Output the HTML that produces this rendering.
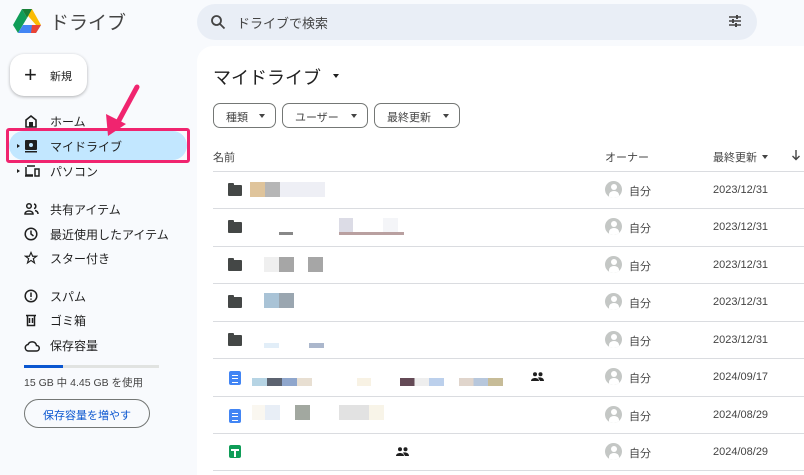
<!DOCTYPE html>
<html><head><meta charset="utf-8"><style>
*{margin:0;padding:0;box-sizing:border-box}
body{width:804px;height:475px;overflow:hidden;background:#f8fafd;font-family:"Liberation Sans","Noto Sans CJK JP",sans-serif;color:#1f1f1f;position:relative}
.a{position:absolute}
.nav{position:absolute;left:50px;font-size:12px;color:#1f1f1f}
.ic{position:absolute;left:24px}
.main{position:absolute;left:197px;top:46px;width:607px;height:429px;background:#fff;border-top-left-radius:16px}
.chip{position:absolute;top:103px;height:25px;border:1px solid #747775;border-radius:7px;font-size:11px;color:#444;padding:5px 0 0 12px}
.chip:after{content:"";position:absolute;right:10px;top:10px;border:3.5px solid transparent;border-top:4px solid #444}
.line{position:absolute;left:213px;width:591px;height:1px;background:#dadce0}
.row{position:absolute;left:213px;width:591px;height:37px}
.own{position:absolute;left:392px;top:12px;font-size:11px;color:#444}
.av{position:absolute;left:392px;top:10px;width:17px;height:17px;border-radius:50%;background:#c4c7c5;overflow:hidden}
.av:before{content:"";position:absolute;left:5.5px;top:3px;width:6px;height:6px;border-radius:50%;background:#fff}
.av:after{content:"";position:absolute;left:3.5px;top:10px;width:10px;height:8px;border-radius:50% 50% 0 0;background:#fff}
.dt{position:absolute;left:500px;top:13px;font-size:11px;color:#444}
.b{position:absolute;height:15px}
.fold{position:absolute;left:15px;top:14px;width:14px;height:11px;background:#444746;border-radius:1px}
.fold:before{content:"";position:absolute;left:0;top:-2px;width:6px;height:3px;background:#444746;border-radius:1px 1px 0 0}
.doc{position:absolute;left:16px;top:13px;width:12px;height:14px;background:#4285f4;border-radius:2px}
.doc:before{content:"";position:absolute;left:3px;top:4px;width:6px;height:6px;border-top:1px solid #fff;border-bottom:1px solid #fff}
.doc:after{content:"";position:absolute;left:3px;top:7px;width:6px;height:1px;background:#fff}
</style></head><body>
<svg class="a" style="left:13px;top:9px" width="28" height="25" viewBox="0 0 28 25"><polygon points="9,0 19,0 28,16 23,16" fill="#fbbc04"/><polygon points="9,0 14,9 5,24 0,16" fill="#0f9d58"/><polygon points="9,0 19,0 14,9" fill="#188038"/><polygon points="5,24 10,16 28,16 23,24" fill="#4285f4"/><polygon points="19,16 28,16 23,24 18,24" fill="#ea4335"/></svg>
<div class="a" style="left:50px;top:8px;font-size:19px;color:#444">ドライブ</div>
<div class="a" style="left:197px;top:4px;width:560px;height:36px;background:#e9eef6;border-radius:18px"></div>
<svg class="a" style="left:210px;top:14px" width="16" height="16" viewBox="0 0 16 16"><circle cx="6.5" cy="6.5" r="4.5" fill="none" stroke="#444" stroke-width="1.8"/><line x1="10" y1="10" x2="14.5" y2="14.5" stroke="#444" stroke-width="1.8"/></svg>
<div class="a" style="left:237px;top:13px;font-size:13px;color:#444">ドライブで検索</div>
<svg class="a" style="left:728px;top:14px" width="14" height="14" viewBox="0 0 14 14" stroke="#444" stroke-width="1.5"><line x1="1" y1="3" x2="13" y2="3"/><line x1="1" y1="7" x2="13" y2="7"/><line x1="1" y1="11" x2="13" y2="11"/><line x1="9" y1="1" x2="9" y2="5" stroke-width="2"/><line x1="5" y1="5" x2="5" y2="9" stroke-width="2"/><line x1="8" y1="9" x2="8" y2="13" stroke-width="2"/></svg>
<div class="a" style="left:10px;top:54px;width:77px;height:42px;background:#fff;border-radius:14px;box-shadow:0 1px 3px rgba(0,0,0,.3)"></div>
<div class="a" style="left:24px;top:62px;font-size:22px;font-weight:300">+</div>
<div class="a" style="left:50px;top:68px;font-size:11px">新規</div>
<svg class="ic" style="top:114px" width="14" height="14" viewBox="0 0 14 14"><path d="M2 6L7 2L12 6V13H2Z" fill="none" stroke="#1f1f1f" stroke-width="1.6"/><rect x="5" y="8" width="4" height="5" fill="#1f1f1f"/></svg>
<div class="nav" style="top:113px">ホーム</div>
<div class="a" style="left:9px;top:131px;width:178px;height:29px;background:#c2e7ff;border-radius:15px"></div>
<div class="a" style="left:6px;top:128px;width:184px;height:35px;border:3px solid #f0246f;border-radius:3px"></div>
<div class="a" style="left:17px;top:144px;border:2.5px solid transparent;border-left:3px solid #1f1f1f"></div>
<svg class="ic" style="top:139px" width="14" height="14" viewBox="0 0 14 14"><rect x="1" y="1" width="12" height="10" rx="1" fill="#1f1f1f"/><rect x="1" y="12" width="12" height="1.5" fill="#1f1f1f"/><circle cx="7" cy="6" r="2" fill="#c2e7ff"/></svg>
<div class="nav" style="top:138px">マイドライブ</div>
<div class="a" style="left:17px;top:169px;border:2.5px solid transparent;border-left:3px solid #1f1f1f"></div>
<svg class="ic" style="top:164px" width="16" height="14" viewBox="0 0 16 14" fill="none" stroke="#1f1f1f" stroke-width="1.5"><path d="M2 3V11H9M1 12H9M3 2H11"/><rect x="11" y="5" width="4" height="7"/></svg>
<div class="nav" style="top:163px">パソコン</div>
<svg class="ic" style="top:202px" width="15" height="13" viewBox="0 0 15 13" fill="none" stroke="#1f1f1f" stroke-width="1.5"><circle cx="5" cy="4" r="2.3"/><path d="M1 12C1 8 9 8 9 12Z"/><path d="M10 2A2.3 2.3 0 0 1 10 6.5M11 8.5C13 9 14 10 14 12"/></svg>
<div class="nav" style="top:201px">共有アイテム</div>
<svg class="ic" style="top:227px" width="14" height="14" viewBox="0 0 14 14" fill="none" stroke="#1f1f1f" stroke-width="1.5"><circle cx="7" cy="7" r="5.8"/><path d="M7 3.5V7L9.5 9"/></svg>
<div class="nav" style="top:226px">最近使用したアイテム</div>
<svg class="ic" style="top:251px" width="14" height="14" viewBox="0 0 24 24" fill="none" stroke="#1f1f1f" stroke-width="2"><path d="M12 2.5L14.8 9H21.5L16 13.2L18 20.5L12 16.2L6 20.5L8 13.2L2.5 9H9.2Z"/></svg>
<div class="nav" style="top:250px">スター付き</div>
<svg class="ic" style="top:289px" width="14" height="14" viewBox="0 0 14 14" fill="none" stroke="#1f1f1f" stroke-width="1.5"><circle cx="7" cy="7" r="5.8"/><path d="M7 3.5V8M7 9.5V10.8"/></svg>
<div class="nav" style="top:288px">スパム</div>
<svg class="ic" style="top:313px" width="14" height="14" viewBox="0 0 14 14" fill="none" stroke="#1f1f1f" stroke-width="1.5"><path d="M2 2.5H12M3.5 2.5V12.5H10.5V2.5M5.5 5V10M8.5 5V10"/></svg>
<div class="nav" style="top:312px">ゴミ箱</div>
<svg class="ic" style="top:340px" width="16" height="12" viewBox="0 0 16 12" fill="none" stroke="#1f1f1f" stroke-width="1.5"><path d="M4 11H12.5A2.7 2.7 0 0 0 12.5 5.5A4.5 4.5 0 0 0 4 4.5A3.3 3.3 0 0 0 4 11Z"/></svg>
<div class="nav" style="top:337px">保存容量</div>
<div class="a" style="left:24px;top:365px;width:135px;height:3px;background:#e1e3e1"></div>
<div class="a" style="left:24px;top:365px;width:39px;height:3px;background:#0b57d0"></div>
<div class="a" style="left:24px;top:375px;font-size:10.5px;color:#444">15 GB 中 4.45 GB を使用</div>
<div class="a" style="left:24px;top:399px;width:126px;height:29px;border:1px solid #747775;border-radius:15px;font-size:11px;color:#0b57d0;text-align:center;padding-top:7px">保存容量を増やす</div>
<svg class="a" style="left:100px;top:84px" width="44" height="60" viewBox="0 0 44 60"><line x1="37" y1="3" x2="17" y2="40" stroke="#f0246f" stroke-width="5" stroke-linecap="round"/><polygon points="8,52 6,30 26,40" fill="#f0246f"/></svg>
<div class="main"></div>
<div class="a" style="left:213px;top:64px;font-size:18px;color:#1f1f1f">マイドライブ</div>
<div class="a" style="left:333px;top:74px;border:3.5px solid transparent;border-top:4px solid #1f1f1f"></div>
<div class="chip" style="left:213px;width:63px">種類</div>
<div class="chip" style="left:282px;width:86px">ユーザー</div>
<div class="chip" style="left:374px;width:86px">最終更新</div>
<div class="a" style="left:213px;top:149px;font-size:11px;color:#444">名前</div>
<div class="a" style="left:605px;top:149px;font-size:11px;color:#444">オーナー</div>
<div class="a" style="left:713px;top:149px;font-size:11px;color:#444">最終更新</div>
<div class="a" style="left:762px;top:155px;border:3.5px solid transparent;border-top:4px solid #444"></div>
<svg class="a" style="left:791px;top:149px" width="10" height="12" viewBox="0 0 10 12" fill="none" stroke="#444" stroke-width="1.4"><path d="M5 1V10.5M1.5 7L5 10.5L8.5 7"/></svg>
<div class="line" style="top:171px"></div>

<div class="row" style="top:171px"><div class="fold"></div>
<div class="b" style="left:37px;top:11px;width:15px;background:#dfc49b"></div><div class="b" style="left:52px;top:11px;width:15px;background:#b6b6b6"></div><div class="b" style="left:67px;top:11px;width:45px;background:#eeeff5"></div>
<div class="av"></div><div class="own" style="left:416px">自分</div><div class="dt">2023/12/31</div></div>
<div class="line" style="top:208px"></div>
<div class="row" style="top:208px"><div class="fold"></div>
<div class="b" style="left:66px;top:24px;width:14px;height:3px;background:#888"></div><div class="b" style="left:126px;top:10px;width:14px;height:14px;background:#dcdce6"></div><div class="b" style="left:126px;top:24px;width:65px;height:3px;background:#b9a0a0"></div><div class="b" style="left:170px;top:10px;width:15px;height:14px;background:#f4f5f8"></div>
<div class="av"></div><div class="own" style="left:416px">自分</div><div class="dt">2023/12/31</div></div>
<div class="line" style="top:246px"></div>
<div class="row" style="top:246px"><div class="fold"></div>
<div class="b" style="left:51px;top:11px;width:15px;background:#efefef"></div><div class="b" style="left:66px;top:11px;width:15px;background:#a6a6a6"></div><div class="b" style="left:95px;top:11px;width:15px;background:#a6a6a6"></div>
<div class="av"></div><div class="own" style="left:416px">自分</div><div class="dt">2023/12/31</div></div>
<div class="line" style="top:283px"></div>
<div class="row" style="top:283px"><div class="fold"></div>
<div class="b" style="left:51px;top:10px;width:15px;background:#a9c3d6"></div><div class="b" style="left:66px;top:10px;width:15px;background:#9aa6b0"></div>
<div class="av"></div><div class="own" style="left:416px">自分</div><div class="dt">2023/12/31</div></div>
<div class="line" style="top:321px"></div>
<div class="row" style="top:321px"><div class="fold"></div>
<div class="b" style="left:51px;top:22px;width:15px;height:5px;background:#e2eef8"></div><div class="b" style="left:96px;top:22px;width:15px;height:5px;background:#abb7cc"></div>
<div class="av"></div><div class="own" style="left:416px">自分</div><div class="dt">2023/12/31</div></div>
<div class="line" style="top:358px"></div>
<div class="row" style="top:358px"><div class="doc"></div>
<div class="b" style="left:39px;top:20px;width:60px;height:8px;background:linear-gradient(90deg,#b6d4e4 25%,#5c6370 25% 50%,#8fa6cc 50% 75%,#e8dfd2 75%)"></div><div class="b" style="left:144px;top:20px;width:14px;height:8px;background:#f8f2e4"></div><div class="b" style="left:187px;top:20px;width:44px;height:8px;background:linear-gradient(90deg,#644a56 33%,#eee 33% 66%,#bcd0ec 66%)"></div><div class="b" style="left:246px;top:20px;width:44px;height:8px;background:linear-gradient(90deg,#e0d5cc 33%,#b7c7dc 33% 66%,#c7bc98 66%)"></div>
<svg class="a" style="left:318px;top:14px" width="13" height="9" viewBox="0 0 13 9" fill="#1f1f1f"><circle cx="4" cy="2.2" r="2"/><circle cx="9.5" cy="2.2" r="2"/><path d="M0 9C0 5 8 5 8 9ZM7 5.5C10 5 13 6 13 9H9Z"/></svg>
<div class="av"></div><div class="own" style="left:416px">自分</div><div class="dt">2024/09/17</div></div>
<div class="line" style="top:396px"></div>
<div class="row" style="top:396px"><div class="doc"></div>
<div class="b" style="left:39px;top:9px;width:13px;background:#faf7f0"></div><div class="b" style="left:52px;top:9px;width:15px;background:#e8eef6"></div><div class="b" style="left:82px;top:9px;width:15px;background:#a2a8a0"></div><div class="b" style="left:126px;top:9px;width:30px;background:#e2e2e2"></div><div class="b" style="left:156px;top:9px;width:15px;background:#f8f4e8"></div>
<div class="av"></div><div class="own" style="left:416px">自分</div><div class="dt">2024/08/29</div></div>
<div class="line" style="top:433px"></div>
<div class="row" style="top:433px"><div class="a" style="left:16px;top:12px;width:12px;height:13px;background:#0f9d58;border-radius:2px"><div class="a" style="left:2px;top:4px;width:8px;height:1.5px;background:#fff"></div><div class="a" style="left:5px;top:4px;width:1.5px;height:8px;background:#fff"></div></div>
<svg class="a" style="left:183px;top:14px" width="13" height="9" viewBox="0 0 13 9" fill="#1f1f1f"><circle cx="4" cy="2.2" r="2"/><circle cx="9.5" cy="2.2" r="2"/><path d="M0 9C0 5 8 5 8 9ZM7 5.5C10 5 13 6 13 9H9Z"/></svg>
<div class="av"></div><div class="own" style="left:416px">自分</div><div class="dt">2024/08/29</div></div>
<div class="line" style="top:470px"></div>
</body></html>
